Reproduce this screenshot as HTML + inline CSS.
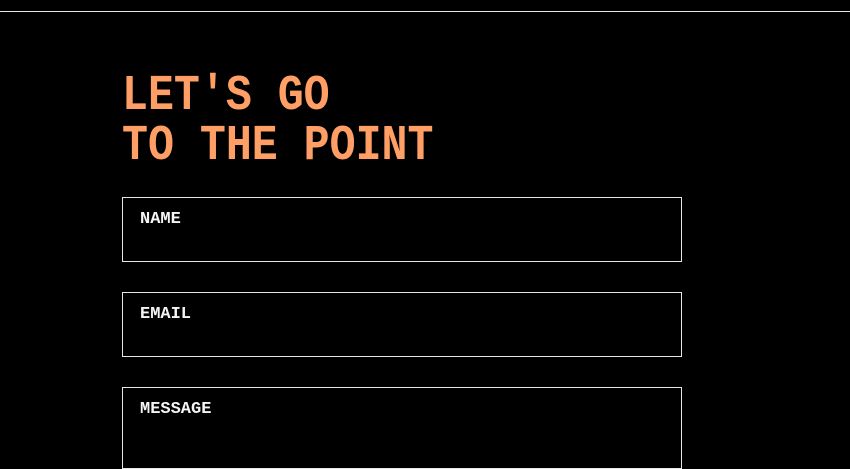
<!DOCTYPE html>
<html><head><meta charset="utf-8"><style>
html,body{margin:0;padding:0;background:#000;width:850px;height:444px;overflow:hidden}
.line{position:absolute;left:0;top:11px;width:850px;height:1px;background:#e8e8e8}
h1{position:absolute;left:122px;top:72px;margin:0;font-family:"Liberation Mono",monospace;font-weight:bold;font-size:50px;line-height:50px;color:#ff9f66;transform:scaleX(0.865);transform-origin:0 0;white-space:nowrap}
.box{position:absolute;left:122px;width:558px;height:63px;border:1px solid #e6e6e6}
.box span{position:absolute;left:17px;top:12px;font-family:"Liberation Mono",monospace;font-weight:bold;font-size:17px;color:#f4f4f4}
</style></head><body>
<div class="line"></div>
<h1>LET'S GO<br>TO THE POINT</h1>
<div class="box" style="top:197px"><span>NAME</span></div>
<div class="box" style="top:292px"><span>EMAIL</span></div>
<div class="box" style="top:387px;height:80px"><span>MESSAGE</span></div>
</body></html>
